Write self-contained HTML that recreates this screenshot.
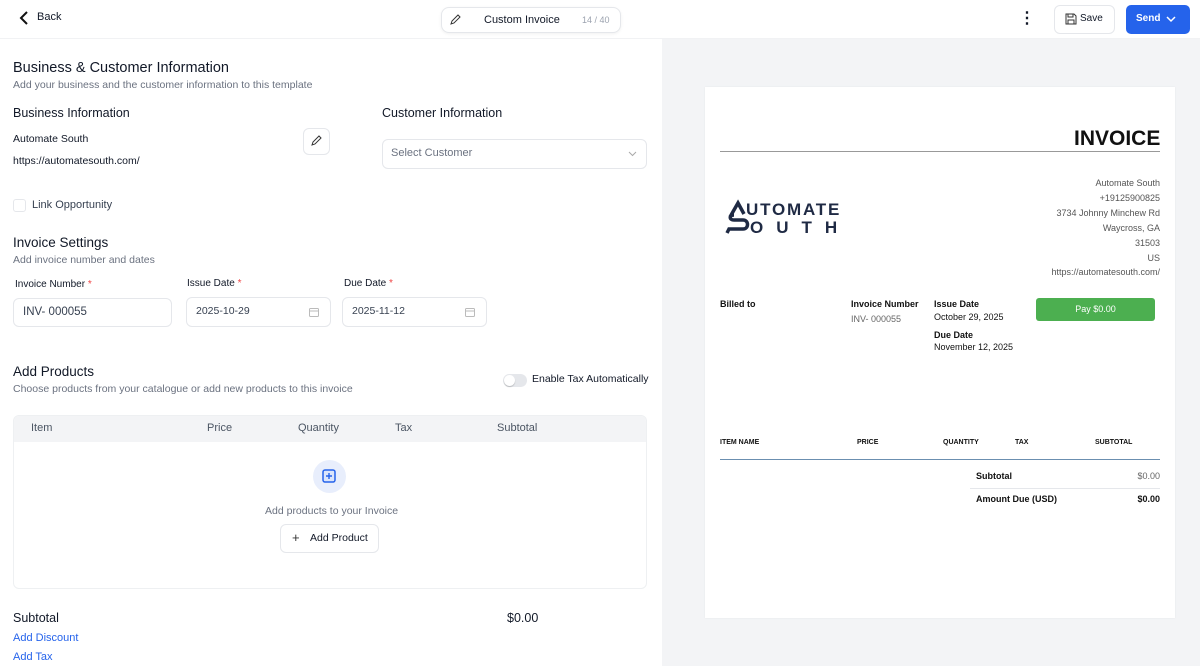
<!DOCTYPE html>
<html><head><meta charset="utf-8"><style>
*{margin:0;padding:0;box-sizing:border-box}
body{width:1200px;height:666px;overflow:hidden;font-family:"Liberation Sans",sans-serif;background:#fff;position:relative;color:#111827}
.a{position:absolute;white-space:nowrap;line-height:1.2}
.g{color:#6b7280}
.box{position:absolute;border:1px solid #e5e7eb;border-radius:6px;background:#fff}
.red{color:#ef4444}
.p{position:absolute;white-space:nowrap;font-size:9px;color:#111;line-height:1.2}
</style></head><body>
<div class="a" style="left:0;top:38px;width:1200px;height:1px;background:#f1f2f4"></div>
<svg class="a" style="left:18px;top:10px" width="14" height="16" viewBox="0 0 14 16"><path d="M9 2L3 8l6 6" stroke="#111" stroke-width="2" fill="none"/></svg>
<div class="a" style="left:37px;top:11px;font-size:11px">Back</div>
<div class="box" style="left:441px;top:7px;width:180px;height:26px;border-radius:8px;box-shadow:0 1px 3px rgba(0,0,0,.06)"></div>
<svg class="a" style="left:449px;top:13px" width="13" height="13" viewBox="0 0 13 13"><path d="M2 11l1-3 6-6 2 2-6 6z" stroke="#333" fill="none"/></svg>
<div class="a" style="left:484px;top:14px;font-size:11px">Custom Invoice</div>
<div class="a g" style="left:582px;top:15px;font-size:9px;color:#9ca3af">14 / 40</div>
<div class="a" style="left:1019px;top:11px;font-size:16px;font-weight:bold;line-height:16px">⋮</div>
<div class="box" style="left:1054px;top:5px;width:61px;height:29px"></div>
<svg class="a" style="left:1065px;top:13px" width="12" height="12" viewBox="0 0 12 12"><path d="M1 1h8l2 2v8H1z M3 1v3h5V1 M3 11V7h6v4" stroke="#333" fill="none"/></svg>
<div class="a" style="left:1080px;top:13px;font-size:10px">Save</div>
<div class="a" style="left:1126px;top:5px;width:64px;height:29px;background:#2563eb;border-radius:5px"></div>
<div class="a" style="left:1136px;top:13px;font-size:10px;color:#fff;font-weight:bold">Send</div>
<svg class="a" style="left:1166px;top:15px" width="10" height="8" viewBox="0 0 10 8"><path d="M1 2l4 4 4-4" stroke="#fff" stroke-width="1.5" fill="none"/></svg>
<div class="a" style="left:662px;top:39px;width:538px;height:627px;background:#f3f4f6"></div>
<div class="a" style="left:705px;top:87px;width:470px;height:531px;background:#fff;box-shadow:0 0 2px rgba(0,0,0,.06)"></div>
<div class="a" style="left:1074px;top:126px;font-size:21px;font-weight:bold;color:#111">INVOICE</div>
<div class="a" style="left:720px;top:151px;width:440px;height:1px;background:#999"></div>
<svg class="a" style="left:724px;top:198px" width="140" height="38" viewBox="0 0 140 38"><path d="M6 19L14 5l6 11 M3 35l2-4h14c6 0 6-9 0-9H10c-5 0-5-5 0-5" stroke="#1f2a44" stroke-width="3.5" fill="none"/><text x="22" y="17" font-size="17" font-family="Liberation Sans" font-weight="bold" fill="#1f2a44" letter-spacing="1.8">UTOMATE</text><text x="26" y="35" font-size="17" font-family="Liberation Sans" font-weight="bold" fill="#1f2a44" letter-spacing="13">OUTH</text></svg>
<div class="a" style="right:40px;top:176px;font-size:9px;color:#555;text-align:right;line-height:14.9px">Automate South<br>+19125900825<br>3734 Johnny Minchew Rd<br>Waycross, GA<br>31503<br>US<br>https://automatesouth.com/</div>
<div class="p" style="left:720px;top:299px;font-weight:bold">Billed to</div>
<div class="p" style="left:851px;top:299px;font-weight:bold">Invoice Number</div>
<div class="p" style="left:851px;top:314px;color:#666">INV- 000055</div>
<div class="p" style="left:934px;top:299px;font-weight:bold">Issue Date</div>
<div class="p" style="left:934px;top:312px">October 29, 2025</div>
<div class="p" style="left:934px;top:330px;font-weight:bold">Due Date</div>
<div class="p" style="left:934px;top:342px">November 12, 2025</div>
<div class="a" style="left:1036px;top:298px;width:119px;height:23px;background:#4caf50;border-radius:3px;color:#fff;font-size:9px;text-align:center;line-height:23px">Pay $0.00</div>
<div class="p" style="left:720px;top:439px;font-size:7px;font-weight:bold">ITEM NAME</div>
<div class="p" style="left:857px;top:439px;font-size:7px;font-weight:bold">PRICE</div>
<div class="p" style="left:943px;top:439px;font-size:7px;font-weight:bold">QUANTITY</div>
<div class="p" style="left:1015px;top:439px;font-size:7px;font-weight:bold">TAX</div>
<div class="p" style="left:1095px;top:439px;font-size:7px;font-weight:bold">SUBTOTAL</div>
<div class="a" style="left:720px;top:459px;width:440px;height:1px;background:#6b8fb0"></div>
<div class="p" style="left:976px;top:471px;font-weight:bold">Subtotal</div>
<div class="p" style="right:40px;top:471px;color:#666">$0.00</div>
<div class="a" style="left:970px;top:488px;width:190px;height:1px;background:#e5e7eb"></div>
<div class="p" style="left:976px;top:494px;font-weight:bold">Amount Due (USD)</div>
<div class="p" style="right:40px;top:494px;font-weight:bold">$0.00</div>
<div class="a" style="left:13px;top:60px;font-size:14.5px">Business &amp; Customer Information</div>
<div class="a g" style="left:13px;top:79px;font-size:10.5px">Add your business and the customer information to this template</div>
<div class="a" style="left:13px;top:106px;font-size:12.5px">Business Information</div>
<div class="a" style="left:382px;top:106px;font-size:12.5px">Customer Information</div>
<div class="a" style="left:13px;top:133px;font-size:10.5px">Automate South</div>
<div class="a" style="left:13px;top:155px;font-size:10.5px">https://automatesouth.com/</div>
<div class="box" style="left:303px;top:128px;width:27px;height:27px"></div>
<svg class="a" style="left:310px;top:134px" width="13" height="13" viewBox="0 0 13 13"><path d="M2 11l1-3 6-6 2 2-6 6z" stroke="#333" fill="none"/></svg>
<div class="box" style="left:382px;top:139px;width:265px;height:30px"></div>
<div class="a" style="left:391px;top:147px;font-size:11px;color:#6b7280">Select Customer</div>
<svg class="a" style="left:628px;top:151px" width="9" height="6" viewBox="0 0 9 6"><path d="M1 1l3.5 3.5L8 1" stroke="#aaa" fill="none"/></svg>
<div class="box" style="left:13px;top:199px;width:13px;height:13px;border-radius:3px"></div>
<div class="a" style="left:32px;top:199px;font-size:11px;color:#374151">Link Opportunity</div>
<div class="a" style="left:13px;top:235px;font-size:13.5px">Invoice Settings</div>
<div class="a g" style="left:13px;top:254px;font-size:10.5px">Add invoice number and dates</div>
<div class="a" style="left:15px;top:279px;font-size:10px">Invoice Number <span class="red">*</span></div>
<div class="a" style="left:187px;top:278px;font-size:10px">Issue Date <span class="red">*</span></div>
<div class="a" style="left:344px;top:278px;font-size:10px">Due Date <span class="red">*</span></div>
<div class="box" style="left:13px;top:298px;width:159px;height:29px"></div>
<div class="a" style="left:23px;top:306px;font-size:11.5px;color:#374151">INV- 000055</div>
<div class="box" style="left:186px;top:297px;width:145px;height:30px"></div>
<div class="a" style="left:196px;top:305px;font-size:10.5px;color:#374151">2025-10-29</div>
<div class="box" style="left:342px;top:297px;width:145px;height:30px"></div>
<div class="a" style="left:352px;top:305px;font-size:10.5px;color:#374151">2025-11-12</div>
<svg class="a" style="left:309px;top:307px" width="10" height="10" viewBox="0 0 10 10"><rect x=".5" y="1.5" width="9" height="8" rx="1" stroke="#bbb" fill="none"/><path d="M.5 4h9" stroke="#bbb"/></svg>
<svg class="a" style="left:465px;top:307px" width="10" height="10" viewBox="0 0 10 10"><rect x=".5" y="1.5" width="9" height="8" rx="1" stroke="#bbb" fill="none"/><path d="M.5 4h9" stroke="#bbb"/></svg>
<div class="a" style="left:13px;top:364px;font-size:13.5px">Add Products</div>
<div class="a g" style="left:13px;top:383px;font-size:10.5px">Choose products from your catalogue or add new products to this invoice</div>
<div class="a" style="left:503px;top:374px;width:24px;height:13px;border-radius:7px;background:#e5e7eb"></div>
<div class="a" style="left:504px;top:375px;width:11px;height:11px;border-radius:50%;background:#fff;box-shadow:0 1px 1px rgba(0,0,0,.2)"></div>
<div class="a" style="left:532px;top:373px;font-size:10.5px">Enable Tax Automatically</div>
<div class="box" style="left:13px;top:415px;width:634px;height:174px;border-color:#eef0f2"></div>
<div class="a" style="left:14px;top:416px;width:632px;height:26px;background:#f3f4f6;border-radius:5px 5px 0 0"></div>
<div class="a" style="left:31px;top:422px;font-size:11px;color:#4b5563">Item</div>
<div class="a" style="left:207px;top:422px;font-size:11px;color:#4b5563">Price</div>
<div class="a" style="left:298px;top:422px;font-size:11px;color:#4b5563">Quantity</div>
<div class="a" style="left:395px;top:422px;font-size:11px;color:#4b5563">Tax</div>
<div class="a" style="left:497px;top:422px;font-size:11px;color:#4b5563">Subtotal</div>
<div class="a" style="left:313px;top:460px;width:33px;height:33px;border-radius:50%;background:#e8eefc"></div>
<svg class="a" style="left:322px;top:469px" width="14" height="14" viewBox="0 0 14 14"><rect x="1" y="1" width="12" height="12" rx="2" stroke="#2563eb" stroke-width="1.5" fill="#dbe5fb"/><path d="M7 4v6M4 7h6" stroke="#2563eb" stroke-width="1.4"/></svg>
<div class="a" style="left:265px;top:505px;font-size:10.5px;color:#6b7280">Add products to your Invoice</div>
<div class="box" style="left:280px;top:524px;width:99px;height:29px"></div>
<div class="a" style="left:292px;top:530px;font-size:13px;color:#333">+</div>
<div class="a" style="left:310px;top:532px;font-size:10.5px">Add Product</div>
<div class="a" style="left:13px;top:611px;font-size:12.5px">Subtotal</div>
<div class="a" style="left:507px;top:611px;font-size:12.5px">$0.00</div>
<div class="a" style="left:13px;top:632px;font-size:11px;color:#2563eb">Add Discount</div>
<div class="a" style="left:13px;top:651px;font-size:11px;color:#2563eb">Add Tax</div>
</body></html>
